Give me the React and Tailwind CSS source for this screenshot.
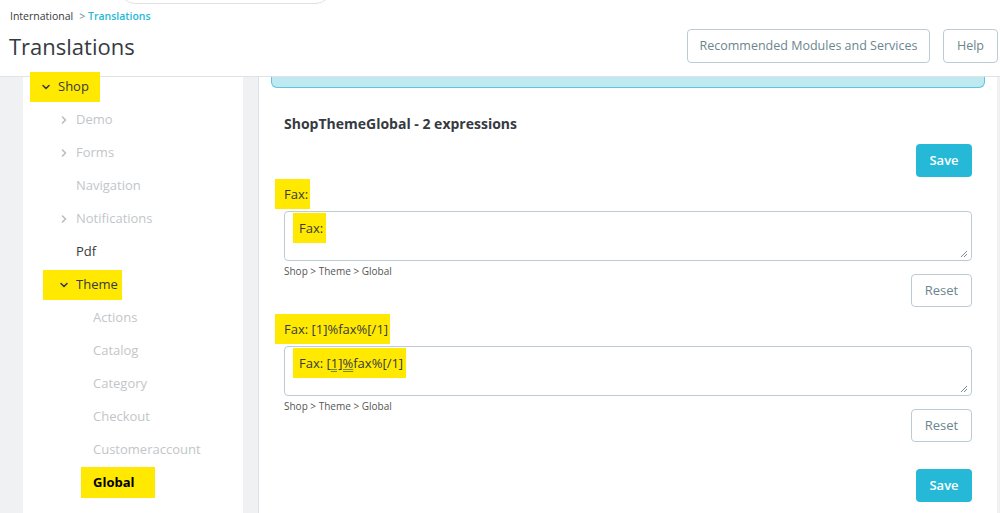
import React from 'react'

const HL = 'bg-[#ffe900]'

function Chevron({ open, className = '' }) {
  return (
    <svg className={`w-[10px] h-[10px] ${className}`} viewBox="0 0 10 10" fill="none" stroke="currentColor" strokeWidth="1.6" strokeLinecap="round" strokeLinejoin="round">
      {open ? <path d="M2 3.5 L5 6.5 L8 3.5" /> : <path d="M3.5 2 L6.5 5 L3.5 8" />}
    </svg>
  )
}

function NavRow({ indent, chevron, open, label, tone, bold, highlight }) {
  const color = tone === 'dark' ? 'text-[#363a41]' : 'text-[#c2c6c9]'
  const inner = (
    <span className="flex items-center">
      <span className="w-[17px] flex items-center">
        {chevron && <Chevron open={open} className={open ? 'text-[#363a41]' : 'text-[#b8bdc0]'} />}
      </span>
      <span className={`${color} ${bold ? 'font-bold text-black' : ''}`}>{label}</span>
    </span>
  )
  return (
    <div className="h-[33px] flex items-center" style={{ paddingLeft: indent }}>
      {highlight ? (
        <span className={`${HL} flex items-center h-[30px] ${highlight}`}>{inner}</span>
      ) : inner}
    </div>
  )
}

function Resize() {
  return (
    <svg className="w-[9px] h-[9px] text-[#7a8a90]" viewBox="0 0 9 9" stroke="currentColor" strokeWidth="1">
      <path d="M8 2 L2 8 M8 5 L5 8" />
    </svg>
  )
}

function Expression({ label, value, mt }) {
  return (
    <div style={{ marginTop: mt }}>
      <div className="h-[20px] leading-[20px] text-[13px] text-[#363a41]">
        <span className={`${HL} inline-block py-[5px] -my-[5px] pl-[9px] -ml-[9px] pr-[2px] leading-[20px]`}>{label}</span>
      </div>
      <div className="mt-[7px] h-[50px] border border-[#bbcdd2] rounded-[4px] flex flex-col justify-between px-[14px] pt-[6px] pb-[2px]">
        <div className="text-[13px] text-[#363a41] leading-[20px]">
          <span className={`${HL} inline-block -ml-[6px] pl-[6px] pr-[3px] -mt-[6px] pt-[5px] pb-[5px]`}>{value}</span>
        </div>
        <div className="flex justify-end -mr-[11px]">
          <Resize />
        </div>
      </div>
      <div className="mt-[4px] h-[12px] leading-[12px] text-[10px] text-[#555]">Shop &gt; Theme &gt; Global</div>
      <div className="-mt-[3px] flex justify-end">
        <button className="w-[61px] h-[33px] border border-[#bbcdd2] rounded-[4px] text-[13px] text-[#6c868e] bg-white">Reset</button>
      </div>
    </div>
  )
}

function SaveBtn({ mt }) {
  return (
    <div className="flex justify-end" style={{ marginTop: mt }}>
      <button className="w-[56px] h-[33px] rounded-[4px] bg-[#25b9d7] text-white text-[13px] font-semibold">Save</button>
    </div>
  )
}

export default function App() {
  return (
    <div className="w-[1000px] h-[513px] overflow-hidden bg-[#eff1f2] font-['Open_Sans',sans-serif] text-[#363a41]">
      {/* Header */}
      <div className="h-[77px] bg-white border-b border-[#dfe3e5] overflow-hidden relative z-0 flex flex-col">
        <div className="h-[4px] flex items-end">
          <div className="ml-[120px] w-[211px] h-[30px] shrink-0 border border-[#dfe3e5] rounded-[16px]" />
        </div>
        <div className="flex justify-between">
          <div className="flex flex-col">
            <div className="mt-[4px] ml-[10px] h-[16px] leading-[16px] text-[10.5px]">
              <span className="text-[#363a41]">International</span>
              <span className="text-[#6c868e] ml-[6px]">&gt; </span>
              <span className="text-[#25b9d7] font-semibold">Translations</span>
            </div>
            <div className="mt-[7px] ml-[9px] h-[30px] leading-[30px] text-[22px] text-[#363a41]">Translations</div>
          </div>
          <div className="flex gap-[13px] mt-[25px] mr-[2px]">
            <button className="h-[34px] w-[243px] border border-[#bbcdd2] rounded-[4px] text-[12.5px] font-medium text-[#6c868e] bg-white">Recommended Modules and Services</button>
            <button className="h-[34px] w-[55px] border border-[#bbcdd2] rounded-[4px] text-[12.5px] font-medium text-[#6c868e] bg-white">Help</button>
          </div>
        </div>
      </div>

      <div className="flex relative z-10">
        {/* Sidebar */}
        <div className="ml-[23px] w-[220px] h-[436px] bg-white">
          <div className="-mt-[7px] text-[13px]">
            <NavRow indent={18} chevron open label="Shop" tone="dark" highlight="-ml-[11px] pl-[11px] pr-[5px] w-[70px]" />
            <NavRow indent={36} chevron label="Demo" />
            <NavRow indent={36} chevron label="Forms" />
            <NavRow indent={36} label="Navigation" />
            <NavRow indent={36} chevron label="Notifications" />
            <NavRow indent={36} label="Pdf" tone="dark" />
            <NavRow indent={36} chevron open label="Theme" tone="dark" highlight="-ml-[16px] pl-[16px] w-[79px]" />
            <NavRow indent={53} label="Actions" />
            <NavRow indent={53} label="Catalog" />
            <NavRow indent={53} label="Category" />
            <NavRow indent={53} label="Checkout" />
            <NavRow indent={53} label="Customeraccount" />
            <div className="h-[33px] flex items-center pl-[58px]">
              <span className={`${HL} h-[31px] w-[74px] flex items-center pl-[12px] text-[13px] font-bold text-black`}>Global</span>
            </div>
          </div>
        </div>

        {/* Main card */}
        <div className="ml-[15px] mr-[3px] flex-1 h-[436px] bg-white border-l border-[#dfe3e5]">
          <div className="mx-[12px] h-[11px] bg-[#bfe9f1] border-x border-b border-[#5fc6dc] rounded-b-[6px]" />
          <div className="pl-[25px] pr-[25px]">
            <div className="mt-[26px] h-[20px] leading-[20px] text-[14px] font-bold text-[#363a41]">ShopThemeGlobal - 2 expressions</div>
            <SaveBtn mt={10} />
            <Expression label="Fax:" value="Fax:" mt={7} />
            <Expression label="Fax: [1]%fax%[/1]" value={<>Fax: [<span className="underline decoration-double decoration-[#7a8a2a]">1]%</span>fax%[/1]</>} mt={12} />
            <SaveBtn mt={27} />
          </div>
        </div>
      </div>
    </div>
  )
}
